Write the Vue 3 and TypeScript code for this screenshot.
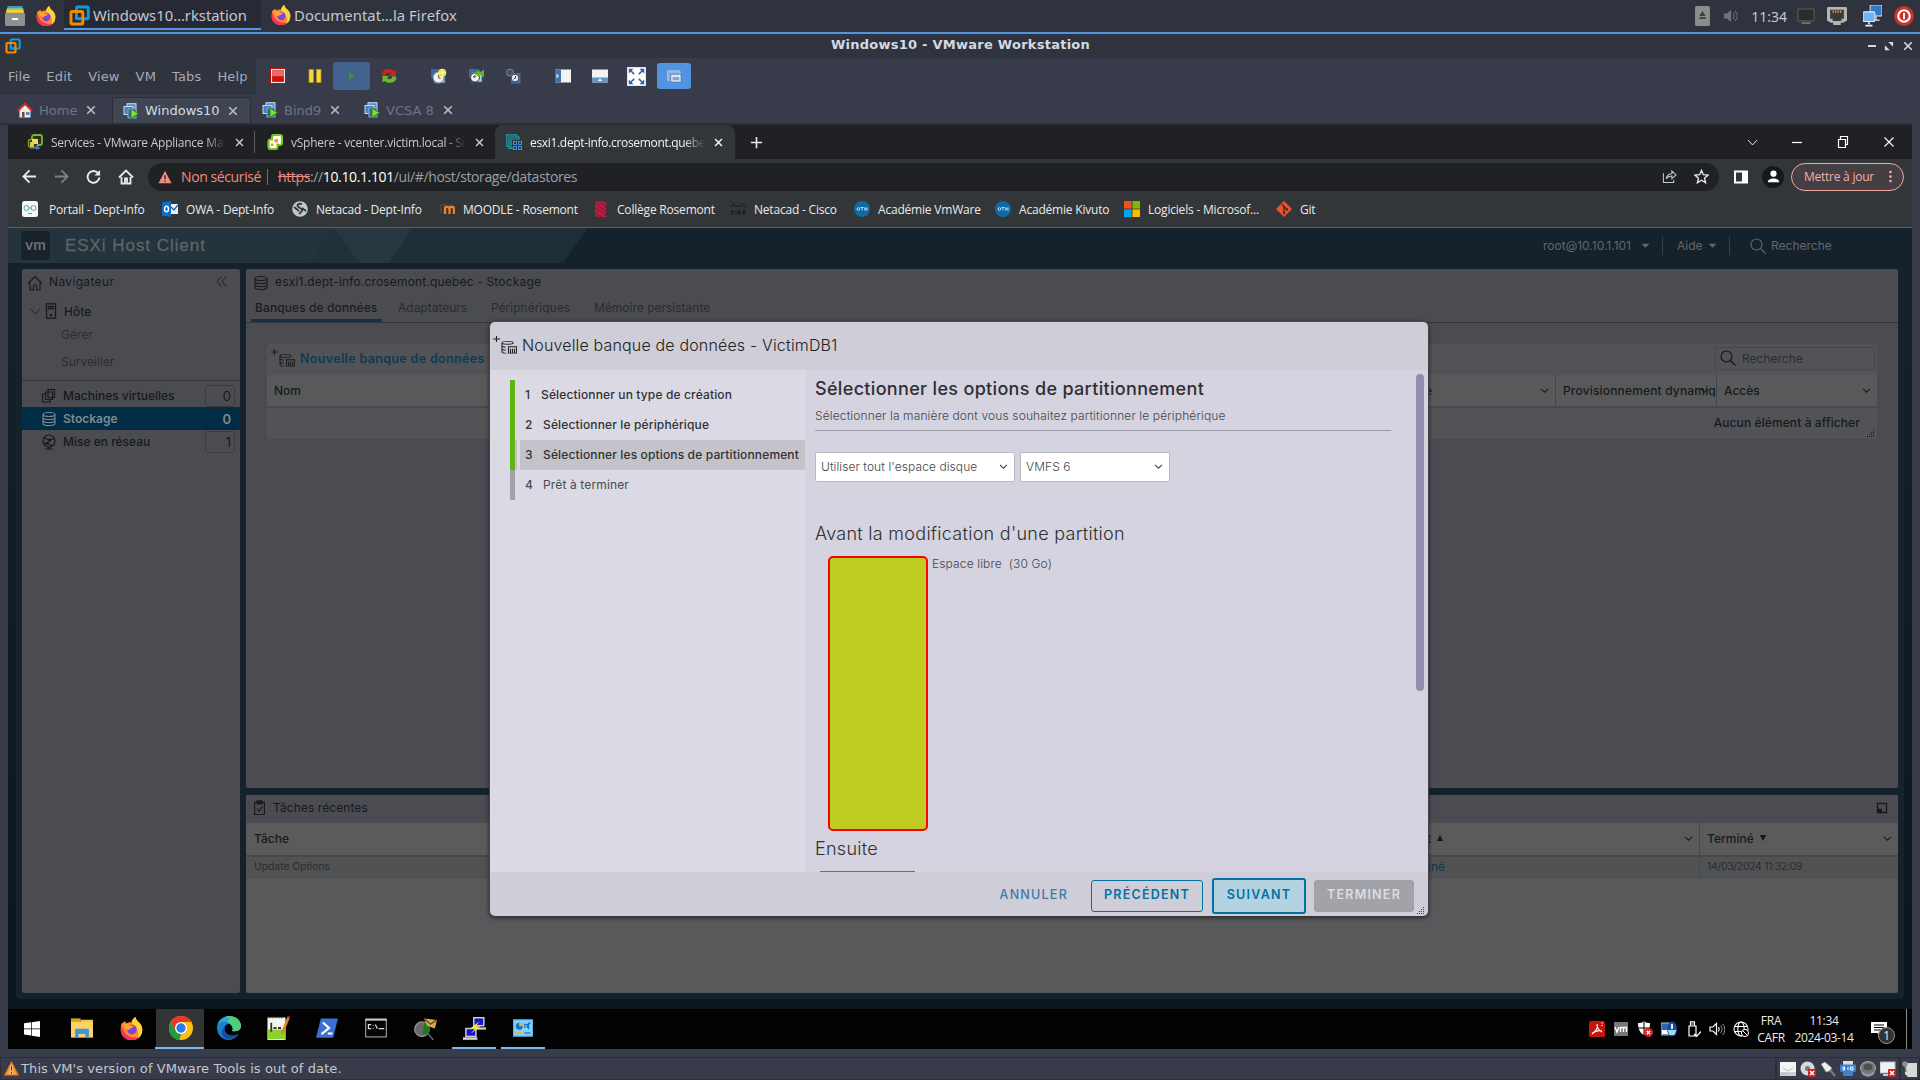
<script setup lang="ts">
import { h } from 'vue'

const gears = '<rect x="1" y="1" width="9" height="9" fill="#3d6a9c"/><rect x="4" y="4" width="10" height="10" fill="#b9d3ea" stroke="#41699b"/>'
const firefox = '<path d="M1 4.500L3.500 3l1 1.500C6 3.500 7 3.500 8 4c.3-2 1.300-3.200 2.800-4 .2 2 1.400 2.800 2.700 4C15 5.500 15.500 7 15.500 9a7.500 7.200 0 01-15 0c0-1.700.2-3.200.5-4.500z" fill="#ff8a26"/><path d="M8 4c.3-2 1.300-3.200 2.800-4 .2 2 1.400 2.800 2.700 4 1.500 1.500 2 3 2 5 0 3-1.500 5-3.500 6.200 1.500-2.500 1.500-7-4-11.200z" fill="#ffd338"/><path d="M.5 9c0 4 3.500 7.200 7.500 7.200 2.500 0 4-.8 5-2C7 15 2 12 1.500 6z" fill="#f8315e"/><circle cx="8.300" cy="8.800" r="3.300" fill="#7a46dd"/><path d="M2.500 5.500C4 4 6 5 7 6c1 0 2 0 2.500.6C8.500 8 7 7.500 6 9 4.500 9 3 7.500 2.500 5.500z" fill="#ffa436"/>'
const vmTab = '<rect x="4" y="0.700" width="9" height="8" fill="#5b8dc4" stroke="#c8dcf2"/><rect x="1" y="3.500" width="9" height="8" fill="#4a7fbd" stroke="#c8dcf2"/><rect x="5" y="6" width="8" height="9" fill="#35659e" stroke="#7fa9d6"/><path d="M8 6l7.500 4.700L8 15.500z" fill="#7fe02c" stroke="#2c7a10" stroke-width=".8"/>'
const vmware = '<rect x="5.700" y="1.500" width="9" height="9" rx="1" fill="none" stroke="#0f9bd8" stroke-width="2.200"/><rect x="1.500" y="5" width="9" height="9.500" rx="1" fill="none" stroke="#f38b00" stroke-width="2.200"/><path d="M5.700 6.500V10.500H9.500" fill="none" stroke="#0f9bd8" stroke-width="2"/>'
const db = '<ellipse cx="8" cy="3.500" rx="6" ry="2"/><path d="M2 3.500v9c0 2.700 12 2.700 12 0v-9M2 6.500c0 2.700 12 2.700 12 0M2 9.500c0 2.700 12 2.700 12 0"/>'
const stroke = (d: string, w = 1, c = 'currentColor') => `<g fill="none" stroke="${c}" stroke-width="${w}">${d}</g>`

const glyphs: Record<string, string> = {
  firefox, vmware, vmTab,
  drawer: '<rect x="2" y="0" width="12" height="4" fill="#4a8ee0"/><rect x="1.500" y="1.500" width="13" height="3" fill="#7fcf4a"/><rect x="1" y="3" width="14" height="3" fill="#f3cf45"/><rect x="0" y="5.300" width="16" height="10.700" rx="1" fill="#8f8f8f"/><rect x="5.500" y="9.500" width="5" height="1.700" rx=".5" fill="#fff"/>',
  eject: '<rect x="1" y="0" width="14" height="16" rx="1.500" fill="#8d8d8d"/><path d="M8 4l3 4H5zM5 9h6v1.300H5z" fill="#3f3f3f"/>',
  sound: '<path d="M1 5.500h3L8 2v12l-4-3.500H1z" fill="#6f737c"/>' + stroke('<path d="M10 5c1.500 2 1.500 4 0 6M12 3c3 3 3 7 0 10"/>', 1.2, '#666a74'),
  monitor: '<rect x="0" y="1" width="16" height="12" rx="1" fill="#4c4c4c"/><rect x="1.500" y="2.500" width="13" height="9" fill="#2c2c2c"/><rect x="4" y="13.500" width="8" height="1.500" fill="#777"/>',
  port: '<path d="M1 0h14a1 1 0 011 1v11l-3 2h-2v2H5v-2H3l-3-2V1a1 1 0 011-1z" fill="#b4b4b4"/><path d="M2.500 2.500h11v8h-2v2h-7v-2h-2z" fill="#3a3a3a"/><path d="M5 3v2M7 3v2M9 3v2M11 3v2" stroke="#d8b23a"/>',
  net: '<rect x="6" y="0" width="10" height="8" rx="1" fill="#3377cc" stroke="#dbe6f3" stroke-width=".8"/><path d="M11 8v3M9 11h5" stroke="#ddd"/><rect x="0" y="5" width="10" height="7" rx="1" fill="#6fb4f2" stroke="#e7eef6" stroke-width=".8"/><path d="M5 12v2M2 15h6" stroke="#eee" stroke-width="1.400"/>',
  power: '<circle cx="8" cy="8" r="8" fill="#c8322b"/><circle cx="8" cy="8" r="4.600" fill="none" stroke="#fff" stroke-width="1.700"/><path d="M8 5.500v5" stroke="#fff" stroke-width="1.500"/>',
  maximize: '<path d="M7 2.500h6.500V9zM2.500 7v6.500H9z" fill="#d3dae3"/>',
  stop: '<rect x="1.500" y="1.500" width="13" height="13" fill="#d30f0f" stroke="#fbe3e3" stroke-width="1.200"/><rect x="2.200" y="2.200" width="11.600" height="6" fill="#e0706d"/><rect x=".5" y=".5" width="15" height="15" fill="none" stroke="#b80b0b" stroke-width="1"/>',
  pause: '<rect x="2" y="1.500" width="4.500" height="13" fill="#f3d93a" stroke="#b98e12" stroke-width=".7"/><rect x="9.500" y="1.500" width="4.500" height="13" fill="#f3d93a" stroke="#b98e12" stroke-width=".7"/>',
  play: '<path d="M4 2l8 6-8 6z" fill="#4a7f68" stroke="#2f6b57"/>',
  cycle: '<path d="M.5 7c0-6 8-7.500 12-4l2-1.500V8H8l2-2C8 4 5 4.500 4.500 8z" fill="#c8261c"/><path d="M15.500 9c0 6-8 7.500-12 4l-2 1.500V8H8l-2 2c2 2 5 1.500 5.500-2z" fill="#6cb82c"/><path d="M14.500 1.500V8H8l2-2c.8-1 .5-1.500 0-2l2.500-1z" fill="#c8261c"/>',
  snap: gears + '<circle cx="8" cy="9" r="5" fill="#f3f3f3" stroke="#999"/><path d="M8 9V6.500M8 9l2 1" stroke="#555"/><circle cx="11.500" cy="4.500" r="3.800" fill="#f6e13a"/><path d="M11.500 1v7M8 4.500h7" stroke="#fff7b0"/>',
  revert: gears + '<circle cx="7" cy="9.500" r="4.500" fill="#f3f3f3" stroke="#333"/><path d="M7 9.500V7M7 9.500l-2-1" stroke="#333"/><path d="M16 1.500v8L11.500 6v3.500L6.500 5.500l5-4V5z" fill="#5cb62c"/>',
  manage: '<circle cx="5" cy="4.500" r="3.500" fill="#444f63" stroke="#7a8aa4"/><rect x="6" y="5" width="9.500" height="10.500" fill="#3f6fa8"/><circle cx="10" cy="10" r="3.800" fill="#e7edf3" stroke="#444"/><path d="M10.500 8v2l-2 1" stroke="#333" fill="none"/>',
  side: '<rect x="0" y="1.500" width="16" height="13" fill="#f2f2f2"/><rect x="0" y="1.500" width="6" height="13" fill="#3c73ad"/><path d="M1.500 5.500v5L4 8z" fill="#dce8f4"/>',
  thumb: '<rect x="0" y="1.500" width="16" height="13" fill="#f2f2f2"/><rect x="0" y="9.500" width="16" height="5" fill="#5e93cc"/><path d="M5.500 13h5L8 10.500z" fill="#e8f0f8"/>',
  full: '<rect width="16" height="16" fill="#fff" stroke="#bbb" stroke-width=".6"/><path d="M1.500 1.500h4l-4 4zM14.500 1.500h-4l4 4zM1.500 14.500h4l-4-4zM14.500 14.500h-4l4-4z" fill="#2b62a5"/><path d="M3 3l3 3M13 3l-3 3M3 13l3-3M13 13l-3-3" stroke="#2b62a5" stroke-width="1.300"/>',
  unity: '<rect x="0" y="2" width="14" height="10" rx="1" fill="#8fb2dc" stroke="#b9cfe9"/><rect x="4" y="5.500" width="11" height="8.500" fill="#dce8f5" stroke="#3f6ea6" stroke-width=".8"/><rect x="6" y="8.500" width="7" height="3.500" fill="#7fa4cf"/>',
  homeRed: '<path d="M2.500 8L8 3l5.500 5v7.500h-11z" fill="#eceae6"/><path d="M.7 9L8 1.700 15.300 9" fill="none" stroke="#d42a2a" stroke-width="1.900"/><path d="M5 10h2.500v5.500H5z" fill="#6b4a3a"/><path d="M9 10h3.500v3H9z" fill="#5a86ba"/>',
  close: stroke('<path d="M3 3l10 10M13 3L3 13"/>', 2.2),
  thinClose: stroke('<path d="M2 2l12 12M14 2L2 14"/>', 1.5),
  services: '<rect x="5" y="1" width="10" height="10" rx="2" fill="#2c2f22" stroke="#7ab62c" stroke-width="1.800"/><rect x="1.500" y="5.500" width="9" height="8" rx="2" fill="#2c2f22" stroke="#8b9a3c" stroke-width="1.300"/><path d="M5 5h6v5H5z" fill="#f0dc5a"/><path d="M3 8h4v5H3z" fill="#e9c63a"/><path d="M3 13.500h6v-2l5 2.500-5 2v-1.500H3z" fill="#3d7cc6"/>',
  vsphere: '<rect x="5" y="1" width="10" height="10" rx="2" fill="#fff" stroke="#7fc21e" stroke-width="2.200"/><rect x="1.500" y="5.500" width="9" height="9.500" rx="2" fill="#fff" stroke="#7fc21e" stroke-width="2.200"/><path d="M6 3.500h7v6H6z" fill="#fff"/><rect x="7.500" y="5" width="3.500" height="3.500" fill="#f39a1a"/><rect x="4" y="9.500" width="2.500" height="2.500" fill="#f39a1a"/>',
  esxi: stroke('<path d="M3 12.500H.8V.8h10V3M5.500 14.500H3V3h10v2.500M7 14.500H5V5h8.500"/>', 1.2, '#1ba0b0') + stroke('<rect x="7.500" y="7.500" width="3" height="3"/><rect x="12.500" y="7.500" width="3" height="3"/><rect x="7.500" y="12.500" width="3" height="3"/><rect x="12.500" y="12.500" width="3" height="3"/>', 1, '#3c8fd0'),
  plus: stroke('<path d="M8 2v12M2 8h12"/>', 1.7),
  chevron: stroke('<path d="M3 5.500l5 5 5-5"/>', 1.5),
  thinChevron: stroke('<path d="M2.500 5l5.500 6 5.500-6"/>', 1.1),
  min: stroke('<path d="M3 8.500h10"/>', 1.2),
  restore: stroke('<path d="M3.500 5.500h7v8h-7zM5.500 5.500v-3h7v8h-2"/>', 1.2),
  back: stroke('<path d="M15 8H2M8 1.500L1.500 8 8 14.500"/>', 1.9),
  fwd: stroke('<path d="M1 8h13M8 1.500L14.500 8 8 14.500"/>', 1.9),
  reload: stroke('<path d="M13 4.500A6.300 6.300 0 1014.300 9"/>', 2) + '<path d="M15 1v6H9z" fill="currentColor"/>',
  home: stroke('<path d="M3.500 8v6.500h3.500v-5h2v5h3.500V8M1 8.500L8 1.500l7 7"/>', 1.8),
  warn: '<path d="M8 1l7.500 14H.5z" fill="#f28b82"/><path d="M8 6v4.500M8 12v1.500" stroke="#202124" stroke-width="1.500"/>',
  share: stroke('<path d="M1.500 4.500V14.500h11V11.500M4.500 10.500c.5-4 3-5.500 6-5.500V2l4.500 4.300-4.500 4V7.500c-2.500 0-4.500.6-6 3z"/>', 1.1),
  star: stroke('<path d="M8 1.500l2 4.600 5 .4-3.800 3.300 1.200 4.900L8 12l-4.400 2.700 1.200-4.900L1 6.500l5-.4z"/>', 1.4),
  sidebar: '<path d="M1 1.500h14v13H1zM3 3.500v9h6v-9z" fill="#fff" fill-rule="evenodd"/>',
  user: '<circle cx="8" cy="5" r="3.300" fill="#fff"/><path d="M2 14c0-5 12-5 12 0z" fill="#fff"/>',
  dots: '<circle cx="8" cy="2.500" r="1.600" fill="currentColor"/><circle cx="8" cy="8" r="1.600" fill="currentColor"/><circle cx="8" cy="13.500" r="1.600" fill="currentColor"/>',
  portail: '<rect width="16" height="16" rx="2.500" fill="#f4f7f8"/>' + stroke('<circle cx="4.500" cy="7" r="2.500"/><circle cx="11.500" cy="7" r="2.500"/><path d="M7 7h2M6 12.500h4"/>', 1, '#5ba0b5'),
  owa: '<rect x="5" y="3" width="11" height="10" fill="#e8f2fb"/><path d="M9 6l3 3 4-5" stroke="#0a62b5" fill="none" stroke-width="1.300"/><path d="M0 1.500L9 0v16l-9-1.500z" fill="#0a6fcb"/><ellipse cx="4.500" cy="8" rx="2" ry="2.700" fill="none" stroke="#fff" stroke-width="1.500"/>',
  globe: '<circle cx="8" cy="8" r="7.800" fill="#c3c6c8"/><path d="M10 3c-5-1-6 2-2 4s2 3-1 6M2 6l5 4M10 7l4 3" stroke="#34383a" stroke-width="1.900" fill="none"/>',
  moodle: stroke('<path d="M6 13V8c0-3 4.500-3 4.500 0v5M10.500 8c0-3 4.500-3 4.500 0v5"/>', 2.3, '#e9822b') + stroke('<path d="M0 5l5-1.500 5 1.500M2 6v6"/>', 1.2, '#5d4c3f'),
  rosemont: '<path d="M2 0h10l2 3-2 3 2 4-2 3 2 3H2z" fill="#a5173b"/>' + stroke('<path d="M2 4l11 9M2 9l10 7M4 1l9 7"/>', .6, '#d23a58'),
  cisco: stroke('<path d="M1 4v2M3.500 2v4M6 4v2M8 4v2M10 4v2M12.500 2v4M15 4v2"/>', 1, '#17191b') + stroke('<path d="M4 10H1.500v3H4M6 9.500V14M10 10H8v1.500h2V13H8M15 10h-2v3h2z"/>', 1, '#17191b'),
  oth: '<circle cx="8" cy="8" r="8" fill="#0f6aa8"/>' + stroke('<circle cx="4.400" cy="8" r="1.300"/><path d="M6.500 6.500h3M8 6.500v3M10.800 6.300v3.400M13 6.300v3.400M10.800 8H13"/>', .9, '#d7e7f2'),
  ms: '<path fill="#f25022" d="M0 0h7.600v7.600H0z"/><path fill="#7fba00" d="M8.400 0H16v7.600H8.400z"/><path fill="#00a4ef" d="M0 8.400h7.600V16H0z"/><path fill="#ffb900" d="M8.400 8.400H16V16H8.400z"/>',
  git: '<path d="M8 0l8 8-8 8-8-8z" fill="#f0502f"/><path d="M6 3.500l2 2V12M8 5.500l3 3" stroke="#3a2620" stroke-width="1.200" fill="none"/><circle cx="8" cy="12" r="1.200" fill="#3a2620"/><circle cx="11" cy="8.500" r="1.200" fill="#3a2620"/>',
  house: stroke('<path d="M3 7.500V15h3.500v-5h3v5H13V7.500M1 8.500l7-7 7 7"/>', 1.1),
  collapse: stroke('<path d="M8 2L2.500 8 8 14M14 2L8.500 8l5.500 6"/>', 1.1),
  host: stroke('<rect x="3.500" y=".8" width="9" height="14.400"/><path d="M5 3.500h6M5 5.500h6"/>', 1.3) + '<circle cx="8" cy="12" r="1.300" fill="currentColor"/>',
  vms: stroke('<rect x="7" y="1.500" width="6.500" height="8"/><path d="M5.500 6H1.500v8h7.500v-3M4.500 4h7v7.500h-7z"/>', 1.2),
  db: stroke(db, 1.1),
  network: stroke('<circle cx="8" cy="7" r="6"/><path d="M4 15h8M8 13v2M3.500 4l5.500 2 4-1.500M9 6l-3 3.500-3.500-1M6 9.500l5 2"/>', 1.2) + '<circle cx="9" cy="6" r="1.400" fill="currentColor"/><circle cx="6" cy="9.500" r="1.400" fill="currentColor"/>',
  newDb: stroke('<path d="M0 3.500h7M3.500 0v7"/><path d="M20 9V8c0-2.300-11-2.300-11 0v10c0 1.500 3 2 4.500 2M9 8c0 2.300 11 2.300 11 0M9 11.500c0 1 2 1.500 4 1.500M9 15c0 1 2 1.500 4 1.500M15.500 12.500h8v7.500h-8zM17.500 15v5M19.500 15v5M21.500 15v5"/>', 1.1),
  search: stroke('<circle cx="6.500" cy="6.500" r="5.500"/><path d="M10.500 10.500L15.500 15.500"/>', 1.1),
  caret: '<path d="M1 5h14L8 12z" fill="currentColor"/>',
  up: '<path d="M8 2l6.500 12h-13z" fill="currentColor"/>',
  down: '<path d="M8 14L1.500 2h13z" fill="currentColor"/>',
  tasks: stroke('<path d="M2 2.500h12v13H2zM5 1h6v3H5zM5 9l2.500 3L11.500 7"/>', 1.4),
  pop: stroke('<rect x="2" y="2" width="12" height="12"/>', 1.8) + '<path d="M2 9h6v6H2z" fill="currentColor"/>',
  grip: '<path d="M12 2h2v2h-2zM8 6h2v2H8zM12 6h2v2h-2zM4 10h2v2H4zM8 10h2v2H8zM12 10h2v2h-2zM0 14h2v2H0zM4 14h2v2H4zM8 14h2v2H8zM12 14h2v2h-2z" fill="currentColor"/>',
  start: '<path d="M0 2.300L7 1.300v6.300H0zM7.700 1.200L16 0v7.600H7.700zM0 8.300h7v6.300l-7-1zM7.700 8.300H16V16l-8.300-1.200z" fill="#fff"/>',
  explorer: '<path d="M0 1h7v3H0z" fill="#e0a010"/><path d="M7 2h9v2H7z" fill="#f6c648"/><path d="M0 3.500h16V15H0z" fill="#fdd461"/><path d="M3 15.300V8.500h10v6.800h-2.500v-3h-5v3z" fill="#3c96dc"/>',
  chrome: '<circle cx="8" cy="8" r="8" fill="#fbc116"/><path d="M1 4a8 8 0 0114 0H8L4.500 10z" fill="#e33b2e"/><path d="M1 4l3.600 6L8 12l-1 4A8 8 0 011 4z" fill="#249a41"/><circle cx="8" cy="8" r="4" fill="#fff"/><circle cx="8" cy="8" r="3.100" fill="#2f79e8"/>',
  edge: '<path d="M0 8A8 8 0 018 0c5 0 8 3.300 8 6.500S13.500 10.500 10 10c1-1 .5-3-1-4.500C6 3 1 4 0 8z" fill="#2fa8dd"/><path d="M6 .2C11-1 16 2.500 16 6.500c0 3-2.500 4-6 3.500 1.500-2-.5-5-4-6C9 3 8 1 6 .2z" fill="#4fcf7a"/><path d="M0 8c.5-4 6-5.500 9-2.500-3-1-5 2-3.500 5 1.500 3 5 4 9 1.500C12 15.500 9 16 8 16a8 8 0 01-8-8z" fill="#1b7fd4"/><path d="M5.300 7.500C4 11 8 14.500 14.500 12 12 16 7.500 16.500 5 14.500 2 12 3 8.500 5.300 7.500z" fill="#124f9c"/>',
  notepad: '<path d="M1 1h12v15H1z" fill="#f3f6ee"/><path d="M1 9h12v6.500H1z" fill="#8ed12f"/><path d="M3.500 4.500v6M5 8h2M8 8h2" stroke="#333" stroke-width="1.200"/><path d="M2 1h10" stroke="#555" stroke-dasharray="1 1"/><path d="M15 1l-4.500 11" stroke="#d98b26" stroke-width="1.800"/><path d="M15.300.2l-.5 1.500" stroke="#c23a2a" stroke-width="1.800"/>',
  powershell: '<path d="M3.500 1H16l-3.500 14H0z" fill="#3b6fd0"/><path d="M5 4l4.500 4L4 12.500M8.500 12H12" stroke="#fff" stroke-width="1.600" fill="none"/>',
  cmd: '<rect x=".5" y="1.500" width="15" height="13" fill="#050505" stroke="#a5a5a5" stroke-width=".8"/><path d="M.5 2h15" stroke="#ccc" stroke-width="1.300"/><path d="M4.500 5.500h-2v3h2M6 6v.5M6 8v.5M7.500 5.500l1.500 3M10 8.500h4" stroke="#ddd" fill="none" stroke-width=".9"/>',
  mailscan: '<circle cx="5.500" cy="8.500" r="5" fill="#686868" stroke="#8d8d8d"/><path d="M7 4h4l-1 8H6z" fill="#157c1c"/><path d="M9.500 11.500l4 4.500" stroke="#666" stroke-width="1"/><path d="M7 1l9 1-1.500 6L9 6z" fill="#d9a94f"/><path d="M7 1l4.500 4L16 2" stroke="#6b4a12" fill="none"/>',
  putty: '<rect x="7.500" y="0.500" width="7" height="5.500" fill="#1414d8" stroke="#cfcfcf"/><path d="M7 8h9" stroke="#cfcfcf" stroke-width="1.600"/><rect x="2" y="8" width="7" height="5.500" fill="#1414d8" stroke="#cfcfcf"/><path d="M0 15h10" stroke="#cfcfcf" stroke-width="1.800"/><path d="M11.500 3L5 8h3.500l-3 3.500 7-5H9z" fill="#f5ec2a"/>',
  panel: '<rect x="0" y="1" width="16" height="14" fill="#58b9f0"/><rect x="1" y="2" width="14" height="12" fill="#86d3fa"/><circle cx="5" cy="6.500" r="2.800" fill="#1473c4"/><path d="M5 6.500V3.700a2.800 2.800 0 012.800 2.800z" fill="#f7b233"/><path d="M9.500 8V5h2v3M12.500 9V4h1.500" stroke="#1473c4" fill="none"/><path d="M2 12h6" stroke="#f7b233" stroke-width="1.300"/><path d="M9 12h5" stroke="#1473c4"/>',
  adobe: '<rect width="16" height="16" rx="1.500" fill="#c5160c"/><path d="M3 13c4-3 6-7 5-10M3 12.500c3-2.500 7-3.500 10-2.500M8 6c1 2 3 4 5 5" stroke="#fff" fill="none" stroke-width="1.200"/><path d="M12 2h2M12 4.500h2" stroke="#f2b8b4"/>',
  vm: '<rect x="1" y="1" width="14" height="14" fill="#777"/><path d="M2 6l2 5 2-5M7.500 11V6.500h3V11M10.500 6.500h3V11" stroke="#fff" stroke-width="1.400" fill="none"/>',
  shield: '<path d="M7 0c2 2 4 2 6 2 0 6-2 10-6 12C3 12 1 8 1 2c2 0 4 0 6-2z" fill="#fff"/><path d="M7 0v14M1 7h12" stroke="#000"/><circle cx="11.500" cy="11.500" r="4.500" fill="#d8231b"/><path d="M9.800 9.800l3.400 3.400M13.200 9.800l-3.400 3.400" stroke="#fff" stroke-width="1.400"/>',
  display: '<rect x="0" y="2" width="8" height="12" fill="#2c66b4" stroke="#9cc4ee"/><path d="M1 9h6v4H1z" fill="#fff"/><ellipse cx="11" cy="8" rx="5" ry="7.500" fill="#1c4d9c"/><path d="M6.500 9h9l-2 5h-5z" fill="#9ed9f2"/><path d="M11 3v5" stroke="#fff" stroke-width="1.800"/>',
  usb: stroke('<path d="M4 5h7v10H4zM5.500 5V.8h4V5M6.500 3h2M9 13l2.500 2.500L16 10.500"/>', 1.2, '#fff'),
  volume: stroke('<path d="M1 6h3l3.500-3.500v11L4 10H1zM9.500 6c1 1.500 1 3 0 4.500"/>', 1.2, '#fff') + stroke('<path d="M11.500 4.500c2 2.500 2 5 0 7.500M13.500 3c3 3 3 8 0 11"/>', 1, '#999'),
  web: stroke('<circle cx="8" cy="8" r="7"/><ellipse cx="8" cy="8" rx="3.200" ry="7"/><path d="M1.500 5.500h13M1.500 10.500h13"/>', 1.1, '#fff') + '<circle cx="12" cy="12" r="3.600" fill="#000" stroke="#fff"/><path d="M9.500 9.500l5 5" stroke="#fff"/>',
  note: '<path d="M0 1h16v11H9.500L12 15.500 6 12H0z" fill="#fff"/><path d="M3 4h10M3 6.500h10M3 9h10" stroke="#000"/>',
  alert: '<path d="M8 0l8 15.500H0z" fill="#f08018" stroke="#b65405" stroke-width=".6"/><path d="M8 3l5.500 11h-11z" fill="#f9a24a"/><path d="M8 5v5M8 11.500v2" stroke="#fff" stroke-width="2"/><path d="M8 5.500v4.500M8 11.800v1.400" stroke="#3a2a10" stroke-width="1.200"/>',
  hdd: '<rect x="0" y="1" width="16" height="14" fill="#f3f3f3"/><path d="M0 11h16v4H0z" fill="#cfcfcf"/><path d="M3 7l5 3 5-3M2 13h7" stroke="#bbb" fill="none"/>',
  cd: '<circle cx="7.500" cy="7.500" r="7" fill="#d9d9d9"/><circle cx="7.500" cy="7.500" r="2.500" fill="#777"/><rect x="8" y="8" width="8" height="8" rx="1" fill="#d1201c"/><path d="M10 10l4 4M14 10l-4 4" stroke="#fff" stroke-width="1.600"/>',
  plug: '<path d="M1 3l4-2 7 6-2 3-4 1z" fill="#eee" stroke="#888" stroke-width=".6"/><path d="M10 9l5 6" stroke="#777" stroke-width="2.500"/>',
  serial: '<path d="M3 0h10v4H3z" fill="#ddd"/><path d="M0 3.500h16v7l-3 1v3.500H3V11.500l-3-1z" fill="#3f7fce"/><path d="M3 6v3h1.500V6zM8 6v3M10.500 6v3H13V6z" stroke="#fff" fill="none"/>',
  speaker: '<ellipse cx="8" cy="7" rx="7.500" ry="6.500" fill="#777" stroke="#aaa"/><ellipse cx="8" cy="6" rx="4.500" ry="3.200" fill="#4f4f4f"/><path d="M2 11c2 5 10 5 12 0" stroke="#999" stroke-width="2" fill="none"/>',
  screenOff: '<rect x="0" y="1" width="15" height="11" fill="#f1f1f1" stroke="#bbb"/><path d="M3 14h8" stroke="#ccc" stroke-width="2"/><rect x="8" y="8" width="8" height="8" rx="1" fill="#d1201c"/><path d="M10 10l4 4M14 10l-4 4" stroke="#fff" stroke-width="1.600"/>',
  message: '<path d="M3 2h12v14H6l-3-3z" fill="#d6dcd4"/><circle cx="3" cy="3" r="2.700" fill="#8e8e8e"/><path d="M3 5l1 6" stroke="#777" stroke-width="1.500"/>',
}

const Icon = (p: { n: string; s?: number; w?: number }) =>
  h('svg', { width: p.w ?? p.s ?? 16, height: p.s ?? 16, viewBox: p.n === 'newDb' ? '0 0 24 21' : '0 0 16 16', preserveAspectRatio: 'none', innerHTML: glyphs[p.n], class: 'ic' })
Icon.props = ['n', 's', 'w']

const menus = ['File', 'Edit', 'View', 'VM', 'Tabs', 'Help']
const vmTabs = [
  { t: 'Home', i: 'homeRed', w: 112, p: 17 },
  { t: 'Windows10', i: 'vmTab', w: 139, p: 10, on: true },
  { t: 'Bind9', i: 'vmTab', w: 103, p: 11 },
  { t: 'VCSA 8', i: 'vmTab', w: 113, p: 10 },
]
const tabs = [
  { t: 'Services - VMware Appliance Ma', i: 'services' },
  { t: 'vSphere - vcenter.victim.local - Su', i: 'vsphere' },
  { t: 'esxi1.dept-info.crosemont.quebec', i: 'esxi', on: true },
]
const bookmarks = [
  { i: 'portail', t: 'Portail - Dept-Info', w: 97 },
  { i: 'owa', t: 'OWA - Dept-Info', w: 90 },
  { i: 'globe', t: 'Netacad - Dept-Info', w: 107 },
  { i: 'moodle', t: 'MOODLE - Rosemont', w: 114 },
  { i: 'rosemont', t: 'Collège Rosemont', w: 97 },
  { i: 'cisco', t: 'Netacad - Cisco', w: 84 },
  { i: 'oth', t: 'Académie VmWare', w: 101 },
  { i: 'oth', t: 'Académie Kivuto', w: 89 },
  { i: 'ms', t: 'Logiciels - Microsof...', w: 112 },
  { i: 'git', t: 'Git', w: 20 },
]
const nav = [
  { i: 'vms', t: 'Machines virtuelles', n: 0 },
  { i: 'db', t: 'Stockage', n: 0, on: true },
  { i: 'network', t: 'Mise en réseau', n: 1 },
]
const steps = ['Sélectionner un type de création', 'Sélectionner le périphérique', 'Sélectionner les options de partitionnement', 'Prêt à terminer']
const apps = [
  { i: 'explorer', s: 22 }, { i: 'firefox', s: 23 }, { i: 'chrome', s: 24, on: true }, { i: 'edge', s: 24 }, { i: 'notepad', s: 24 },
  { i: 'powershell', s: 22 }, { i: 'cmd', s: 22 }, { i: 'mailscan', s: 23 }, { i: 'putty', s: 23, run: true }, { i: 'panel', s: 20, run: true },
]
const tray = ['adobe', 'vm', 'shield', 'display', 'usb', 'volume', 'web']
const devices = ['hdd', 'cd', 'plug', 'serial', 'speaker', 'screenOff']
</script>

<template>
  <div class="desktop">
    <div class="panel">
      <Icon n="drawer" :s="20" />
      <Icon n="firefox" :s="20" />
      <div class="task on"><Icon n="vmware" :s="21" /><span>Windows10…rkstation</span></div>
      <div class="task second"><Icon n="firefox" :s="20" /><span>Documentat…la Firefox</span></div>
      <div class="systray">
        <Icon n="eject" :s="20" :w="17" /><Icon n="sound" /><span class="clock">11:34</span>
        <Icon n="monitor" :s="18" /><Icon n="port" :s="18" :w="20" /><Icon n="net" :s="22" :w="19" class="netw" /><Icon n="power" :s="20" />
      </div>
    </div>
    <div class="titlebar">
      <Icon n="vmware" />
      <b>Windows10 - VMware Workstation</b>
      <div class="wm"><i class="dash"></i><Icon n="maximize" :s="12" /><Icon n="close" :s="12" /></div>
    </div>
    <div class="menubar">
      <div class="menus"><span v-for="m in menus" :key="m">{{ m }}</span></div>
      <div class="tools">
        <i><Icon n="stop" /></i><i><Icon n="pause" /></i><i class="dim"><Icon n="play" /></i><i><Icon n="cycle" /></i>
        <i class="gap"><Icon n="snap" :s="17" /></i><i><Icon n="revert" /></i><i><Icon n="manage" /></i>
        <i class="gap"><Icon n="side" /></i><i><Icon n="thumb" /></i><i><Icon n="full" :s="19" /></i><i class="blue"><Icon n="unity" :s="15" /></i>
      </div>
    </div>
    <div class="vmtabs">
      <div v-for="t in vmTabs" :key="t.t" class="vmtab" :class="{ on: t.on }" :style="{ width: t.w + 'px', paddingLeft: t.p + 'px' }">
        <Icon :n="t.i" :s="16" /><span>{{ t.t }}</span><Icon n="close" :s="12" />
      </div>
    </div>

    <div class="guest">
      <div class="ctabs">
        <div v-for="t in tabs" :key="t.t" class="ctab" :class="{ on: t.on }">
          <Icon :n="t.i" /><span>{{ t.t }}</span><Icon n="close" :s="11" />
        </div>
        <Icon n="plus" :s="15" />
        <div class="winbtns"><Icon n="thinChevron" :s="13" /><Icon n="min" /><Icon n="restore" /><Icon n="thinClose" :s="12" /></div>
      </div>
      <div class="ctool">
        <Icon n="back" :s="15" /><Icon n="fwd" :s="15" class="off" /><Icon n="reload" :s="15" /><Icon n="home" :s="16" />
        <div class="url">
          <Icon n="warn" :s="14" /><span class="insec">Non sécurisé</span><i class="bar"></i>
          <span class="addr"><s>https</s>://<b>10.10.1.101</b>/ui/#/host/storage/datastores</span>
          <Icon n="share" :s="15" /><Icon n="star" :s="15" />
        </div>
        <Icon n="sidebar" class="side" /><span class="avatar"><Icon n="user" :s="15" /></span>
        <div class="update"><span>Mettre à jour</span><Icon n="dots" :s="13" /></div>
      </div>
      <div class="marks">
        <div v-for="b in bookmarks" :key="b.t" class="mark"><Icon :n="b.i" /><span :style="{ width: b.w + 'px' }">{{ b.t }}</span></div>
      </div>

      <div class="page">
        <svg class="facets" width="1904" height="35"><path d="M0 0H325L352 35H0z" fill="#25333d" /><path d="M325 0L352 35H300z" fill="#22303a" /><path d="M325 0H405L382 35H352z" fill="#28363f" /><path d="M405 0H580L555 35H382z" fill="#1f2d37" /></svg>
        <header class="esx">
          <span class="badge">vm</span><span class="brand">ESXi Host Client</span>
          <div class="acct"><span class="user">root@10.10.1.101</span><Icon n="caret" :s="9" /><i></i><span class="help">Aide</span><Icon n="caret" :s="9" /><i></i><Icon n="search" class="mag" /><span>Recherche</span></div>
        </header>
        <div class="frame">
          <aside class="nav">
            <div class="navhead"><Icon n="house" /><span>Navigateur</span><Icon n="collapse" :s="13" /></div>
            <div class="host"><Icon n="thinChevron" :s="13" /><Icon n="host" /><span>Hôte</span></div>
            <div class="sub">Gérer</div>
            <div class="sub two">Surveiller</div>
            <div class="navlist">
              <div v-for="n in nav" :key="n.t" class="navrow" :class="{ on: n.on }"><Icon :n="n.i" /><span>{{ n.t }}</span><em>{{ n.n }}</em></div>
            </div>
          </aside>
          <div class="col">
            <section class="store">
              <div class="crumb"><Icon n="db" /><span>esxi1.dept-info.crosemont.quebec - Stockage</span></div>
              <div class="subtabs"><span class="on t1">Banques de données</span><span class="t2">Adaptateurs</span><span class="t3">Périphériques</span><span>Mémoire persistante</span></div>
              <div class="grid">
                <div class="gtool"><Icon n="newDb" :w="24" :s="18" /><b>Nouvelle banque de données</b><div class="find"><Icon n="search" /><span>Recherche</span></div></div>
                <div class="ghead">
                  <span class="first">Nom</span>
                  <div class="c1"><span>e</span><Icon n="chevron" :s="11" /></div>
                  <div class="c2"><span>Provisionnement dynamiq</span><Icon n="chevron" :s="11" /></div>
                  <div class="c3"><span>Accès</span><Icon n="chevron" :s="11" /></div>
                </div>
                <div class="grow"><span>Aucun élément à afficher</span><Icon n="grip" :s="8" /></div>
              </div>
            </section>
            <section class="recent">
              <div class="rhead"><Icon n="tasks" :s="15" :w="13" /><span>Tâches récentes</span><Icon n="pop" :s="12" /></div>
              <div class="rcols"><span class="first">Tâche</span><div class="r1"><span>t</span><Icon n="up" :s="8" /><Icon n="chevron" :s="11" class="end" /></div><div class="r2"><span>Terminé</span><Icon n="down" :s="8" /><Icon n="chevron" :s="11" class="end" /></div></div>
              <div class="rrow"><span class="first">Update Options</span><div class="r1"><span class="link">iné</span></div><div class="r2 stamp">14/03/2024 11:32:09</div></div>
            </section>
          </div>
        </div>

        <div class="modal">
          <div class="mhead"><Icon n="newDb" :w="24" :s="18" /><span>Nouvelle banque de données - VictimDB1</span></div>
          <div class="mbody">
            <ol class="steps">
              <li v-for="(s, i) in steps" :key="s" :class="{ cur: i === 2, todo: i === 3 }"><b>{{ i + 1 }}</b><span>{{ s }}</span></li>
            </ol>
            <div class="mcontent">
              <h2>Sélectionner les options de partitionnement</h2>
              <p>Sélectionner la manière dont vous souhaitez partitionner le périphérique</p>
              <div class="selects">
                <div class="select wide"><span>Utiliser tout l'espace disque</span><Icon n="chevron" :s="11" /></div>
                <div class="select"><span>VMFS 6</span><Icon n="chevron" :s="11" /></div>
              </div>
              <h3>Avant la modification d'une partition</h3>
              <div class="part"><div class="disk"></div><span>Espace libre&nbsp; (30 Go)</span></div>
              <h3 class="after">Ensuite</h3>
              <div class="next"></div>
            </div>
            <div class="scroll"></div>
          </div>
          <div class="mfoot"><span class="cancel">ANNULER</span><span class="btn prev">PRÉCÉDENT</span><span class="btn go">SUIVANT</span><span class="btn done">TERMINER</span><Icon n="grip" :s="8" /></div>
        </div>
      </div>

      <div class="taskbar">
        <div class="startbtn"><Icon n="start" /></div>
        <div v-for="a in apps" :key="a.i" class="app" :class="{ on: a.on, run: a.run }"><Icon :n="a.i" :s="a.s" /></div>
        <div class="tray">
          <Icon v-for="t in tray" :key="t" :n="t" />
          <div class="lang"><span>FRA</span><span>CAFR</span></div>
          <div class="date"><span>11:34</span><span>2024-03-14</span></div>
          <div class="notes"><Icon n="note" /><b>1</b></div>
        </div>
      </div>
    </div>

    <div class="status">
      <Icon n="alert" :s="15" /><span>This VM's version of VMware Tools is out of date.</span>
      <div class="devices"><Icon v-for="d in devices" :key="d" :n="d" /></div>
      <div class="msg"><Icon n="message" /></div>
    </div>
  </div>
</template>

<style>
body { background: #383c4a; overflow: hidden; }
.ic { display: block; flex: none; }
</style>

<style scoped>
* { box-sizing: border-box; }
.desktop { width: 1920px; height: 1080px; display: flex; flex-direction: column; background: #383c4a; color: #c3c7d0; font: 13px "DejaVu Sans", sans-serif; white-space: nowrap; overflow: hidden; }
i { font-style: normal; }

.panel { height: 34px; flex: none; display: flex; align-items: flex-start; background: #2f333e; border-bottom: 2px solid #5294e2; padding: 6px 6px 0 5px; gap: 11px; font: 14.800px "Noto Sans", sans-serif; }
.task { display: flex; align-items: center; gap: 3px; height: 30px; margin-top: -6px; margin-left: -3px; padding-left: 5px; width: 197px; }
.task.on { background: #272a34; border-bottom: 2px solid #5294e2; padding-top: 2px; }
.task.second { width: 200px; margin-left: -6px; gap: 3px; letter-spacing: .08px; }
.systray { margin-left: auto; display: flex; align-items: center; height: 20px; gap: 12px; }
.systray .netw { margin-left: 4px; }
.clock { margin: 0 -2px 0 0; font-size: 14px; }
.titlebar { height: 24px; flex: none; display: flex; align-items: center; background: #2f343f; padding: 0 6px 0 5px; justify-content: space-between; color: #d3dae3; }
.titlebar b { font-size: 13px; margin: -3px 0 0 32px; letter-spacing: .25px; }
.wm { display: flex; align-items: center; gap: 7px; }
.dash { width: 8px; height: 2px; background: #d3dae3; }
.menubar { height: 37px; flex: none; display: flex; }
.menus { width: 256px; background: #2f343f; display: flex; align-items: center; gap: 16px; padding-left: 8px; color: #a4aab7; letter-spacing: .15px; }
.tools { display: flex; align-items: center; padding-left: 3px; padding-bottom: 1px; }
.tools i { width: 37px; height: 28px; display: flex; align-items: center; justify-content: center; }
.tools .gap { margin-left: 13px; }
.tools .dim { background: #43628f; border-radius: 3px; }
.tools .blue { width: 34px; height: 26px; background: #5294e2; border-radius: 3px; margin-left: 2px; }
.vmtabs { height: 30px; flex: none; display: flex; padding-top: 2px; border-bottom: 2px solid #2b2e39; margin: 0 8px 0 0; }
.vmtab { display: flex; align-items: center; gap: 6px; color: #6f7482; }
.vmtab .ic:last-child { color: #b8bcc0; margin-left: 2px; }
.vmtab.on { background: #404552; border: 1px solid #2b2e39; border-bottom: 0; color: #d3dae3; }
.vmtab.on .ic:last-child { margin-left: 1px; }

.guest { margin-left: 8px; width: 1904px; height: 924px; flex: none; display: flex; flex-direction: column; font: 12px "Open Sans", sans-serif; letter-spacing: -.25px; color: #e8eaed; }
.ctabs { height: 34px; flex: none; display: flex; align-items: center; background: #202124; padding-left: 7px; }
.ctab { width: 240px; height: 34px; display: flex; align-items: center; gap: 8px; padding-left: 12px; color: #c6c9cc; border-right: 1px solid #4b4d50; border-image: linear-gradient(transparent 20%, #5a5c5f 20% 80%, transparent 80%) 1; }
.ctab:nth-child(2) { border-color: transparent; border-image: none; padding-left: 12px; }
.ctab.on { background: #323639; border: 0; border-radius: 8px 8px 0 0; color: #f1f3f4; padding-left: 11px; }
.ctab.on span { letter-spacing: -.32px; }
.ctab span { width: 175px; -webkit-mask-image: linear-gradient(90deg, #000 88%, transparent); mask-image: linear-gradient(90deg, #000 88%, transparent); }
.ctabs > .ic { margin-left: 14px; }
.winbtns { margin-left: auto; display: flex; align-items: center; gap: 30px; padding-right: 17px; color: #fff; }
.winbtns .ic:last-child { margin-left: 2px; }
.ctool { height: 36px; flex: none; background: #323639; display: flex; align-items: center; padding-left: 14px; gap: 17px; padding-bottom: 1px; }
.off { color: #7d8083; }
.url { width: 1571px; height: 28px; border-radius: 14px; background: #202124; display: flex; align-items: center; padding: 0 10px; margin-left: -3px; font-size: 14px; }
.insec { color: #f28b82; margin-left: 9px; width: 80px; letter-spacing: -.4px; }
.bar { width: 1px; height: 16px; background: #6b6d70; margin: 0 10px 0 6px; }
.addr { color: #9aa0a6; letter-spacing: -.37px; }
.addr s { color: #f28b82; }
.addr b { color: #fff; font-weight: 400; }
.url .ic:nth-last-child(2) { margin-left: auto; margin-right: 17px; color: #c6c9cc; }
.side { margin-left: -3px; }
.avatar { width: 22px; height: 22px; border-radius: 50%; background: #17181a; display: flex; align-items: center; justify-content: center; margin: 0 0 0 -4px; }
.update { width: 113px; height: 28px; border: 1px solid #f5a7a0; border-radius: 14px; color: #f6aea9; background: #433f43; display: flex; align-items: center; justify-content: space-between; padding: 0 6px 0 12px; margin-left: -10px; }
.marks { height: 33px; flex: none; background: #323639; border-bottom: 1px solid #5c5f61; display: flex; align-items: center; gap: 16px; padding: 0 0 4px 14px; letter-spacing: -.2px; }
.mark { display: flex; align-items: center; gap: 8px; }
.mark:first-child { gap: 11px; }

.page { height: 781px; flex: none; position: relative; background: linear-gradient(#15222c, #0b151d); font-family: Inter, sans-serif; letter-spacing: 0; color: #18191b; font-size: 12px; }
.facets { position: absolute; left: 0; top: 0; }
.esx { position: relative; height: 35px; display: flex; align-items: center; padding-left: 13px; color: #646668; }
.badge { width: 29px; height: 29px; border-radius: 3px; background: #17222a; display: flex; align-items: center; justify-content: center; font-size: 14px; font-weight: 600; padding-bottom: 3px; color: #6f7173; }
.brand { font: 17px "Liberation Sans", sans-serif; letter-spacing: .95px; margin-left: 15px; color: #5f6366; -webkit-text-stroke: .3px #5f6366; }
.acct { margin-left: auto; display: flex; align-items: center; width: 369px; height: 35px; }
.acct i { width: 1px; height: 18px; background: #36434b; margin: 0 14px 0 12px; }
.user { width: 98px; }
.help { width: 31px; }
.acct .mag { margin: 0 5px 0 6px; }
.frame { position: relative; margin: 0 8px; height: 736px; background: #15222b; border-radius: 4px; padding: 6px; display: flex; gap: 6px; }
.nav { width: 218px; height: 724px; background: #4b4c51; border-radius: 2px; }
.navhead { height: 27px; display: flex; align-items: center; padding: 0 12px 0 5px; gap: 6px; letter-spacing: .35px; }
.navhead span, .crumb span { margin-top: -2px; }
.navhead .ic:last-child { margin-left: auto; margin-top: -3px; }
.host { display: flex; align-items: center; height: 30px; padding-left: 7px; gap: 1px; font-weight: 500; }
.host span { margin-left: 4px; }
.sub { height: 17px; line-height: 17px; padding-left: 39px; color: #2c2d2f; }
.sub.two { margin-top: 10px; }
.navlist { margin-top: 10px; border-top: 1px solid #38393b; padding-top: 3px; }
.navrow { height: 23px; display: flex; align-items: center; padding: 0 5px 0 19px; gap: 6px; font-weight: 500; }
.navrow em { margin-left: auto; width: 30px; height: 22px; border: 1px solid #3a3b3e; border-radius: 3px; font-style: normal; font-weight: 400; text-align: right; padding: 3px 3px 0 0; font-size: 13px; line-height: 15px; }
.navrow.on { background: #002d45; color: #7e8a90; font-weight: 600; }
.navrow.on em { border-color: #0d2533; font-weight: 600; }
.col { width: 1652px; display: flex; flex-direction: column; gap: 7px; }
.store { height: 519px; background: #4b4c51; border-radius: 2px; }
.crumb { height: 27px; display: flex; align-items: center; padding-left: 7px; gap: 6px; letter-spacing: .17px; }
.subtabs { height: 27px; border-bottom: 1px solid #35363a; display: flex; line-height: 24px; padding-left: 5px; color: #2a2b2d; }
.subtabs .on { color: #1b1c1e; font-weight: 500; border-bottom: 3px solid #123347; padding-left: 4px; letter-spacing: .1px; }
.t1 { width: 131px; margin-right: 16px; }
.t2 { width: 93px; }
.t3 { width: 103px; }
.grid { margin: 21px 21px 0; background: #525357; border-radius: 2px; }
.gtool { height: 31px; display: flex; align-items: center; padding: 0 2px 4px 4px; color: #1c1d1f; }
.gtool b { color: #0b3c55; font-size: 12.500px; letter-spacing: .34px; margin-left: 5px; margin-top: 1px; font-weight: 600; }
.find { margin-left: auto; width: 160px; height: 23px; border: 1px solid #47484b; border-radius: 2px; display: flex; align-items: center; padding-left: 4px; gap: 6px; margin-top: 1px; color: #2c2d2f; }
.find .ic { color: #101112; }
.ghead { height: 33px; background: #58595b; border-bottom: 2px solid #48494c; display: flex; font-weight: 500; line-height: 31px; }
.ghead .ic { margin: 10px 5px 0 auto; }
.first { padding-left: 7px; flex: 1; }
.c1 { width: 130px; display: flex; }
.c2 { width: 161px; border-left: 1px solid #46474a; padding-left: 7px; display: flex; position: relative; letter-spacing: .17px; }
.c2 .ic { position: absolute; right: 6px; top: 0; margin-right: 0; }
.c3 { width: 161px; border-left: 1px solid #46474a; padding-left: 7px; display: flex; }
.grow { height: 31px; display: flex; justify-content: flex-end; align-items: center; font-weight: 500; padding-right: 2px; padding-bottom: 2px; letter-spacing: .1px; }
.grow .ic { margin: 20px 0 0 7px; }
.recent { height: 198px; background: #58595b; border-radius: 2px; overflow: hidden; }
.rhead { height: 28px; background: #4b4c51; display: flex; align-items: center; padding: 0 10px 3px 7px; gap: 7px; letter-spacing: .08px; }
.rhead .ic:last-child { margin-left: auto; }
.rcols { height: 34px; background: #5b5b5c; border-bottom: 2px solid #47484a; display: flex; line-height: 31px; font-weight: 500; }
.rcols .first, .rrow .first { padding-left: 8px; }
.rcols .ic { margin: 11px 0 0 5px; }
.rcols .ic.end { margin: 10px 5px 0 auto; }
.r1 { width: 272px; display: flex; }
.r2 { width: 199px; border-left: 1px solid #46474a; padding-left: 7px; display: flex; }
.rrow { height: 22px; background: #515254; display: flex; line-height: 19px; font-size: 10.500px; color: #2b2c2e; }
.rrow .first { letter-spacing: -.1px; }
.stamp { letter-spacing: -.32px; }
.link { color: #12384e; font-size: 12px; padding-left: 1px; }

.modal { position: absolute; left: 482px; top: 94px; width: 938px; height: 594px; border-radius: 5px; background: #cecdd8; box-shadow: 0 1px 5px #111, 0 0 0 1px #6a6a70; overflow: hidden; color: #45464a; display: flex; flex-direction: column; }
.mhead { height: 48px; flex: none; display: flex; align-items: center; padding-left: 3px; gap: 5px; font-size: 16px; font-weight: 300; padding-bottom: 3px; color: #222; letter-spacing: .16px; }
.mbody { height: 502px; display: flex; background: #d4d3df; overflow: hidden; }
.steps { list-style: none; margin: 0; padding: 10px 0 0 20px; width: 315px; background: #dbdae4; flex: none; }
.steps li { height: 30px; border-left: 5px solid #60b515; display: flex; align-items: center; padding: 0 0 2px 10px; color: #313136; font-weight: 500; }
.steps b { width: 18px; font-weight: 500; flex: none; }
.steps li:first-child b { width: 16px; }
.steps li span { letter-spacing: .14px; }
.steps .cur { background: linear-gradient(90deg, #c3c3c9 2px, #dbdae4 2px 5px, #c3c3c9 5px); }
.steps .todo { border-color: #a2a2a7; font-weight: 400; color: #4a4a50; }
.mcontent { width: 611px; padding-left: 10px; font-weight: 300; letter-spacing: .13px; }
h2 { margin: 8px 0 0; font-size: 18px; line-height: 22px; font-weight: 500; color: #2f2f33; letter-spacing: .33px; }
p { margin: 7px 0 0; line-height: 18px; width: 576px; height: 24px; border-bottom: 1px solid #9b9aa8; }
.selects { display: flex; gap: 5px; margin-top: 21px; }
.select { width: 150px; height: 30px; background: #fff; border: 1px solid #b9b9c0; border-radius: 2px; display: flex; align-items: center; justify-content: space-between; padding: 0 5px 2px; letter-spacing: .08px; }
.select.wide { width: 200px; }
h3 { margin: 41px 0 0; font-size: 18px; line-height: 22px; font-weight: 300; color: #2f2f33; letter-spacing: .28px; }
.part { display: flex; margin: 11px 0 0 13px; gap: 4px; line-height: 16px; }
.disk { width: 100px; height: 275px; background: #bfcc22; border: 2px solid #fd0000; border-radius: 5px; }
h3.after { margin-top: 7px; }
.next { width: 95px; height: 20px; margin: 11px 0 0 5px; background: #0f8fc8; }
.scroll { width: 8px; height: 317px; margin-top: 4px; background: #918fae; border-radius: 4px; }
.mfoot { height: 44px; display: flex; align-items: center; justify-content: flex-end; font-size: 12.500px; font-weight: 500; letter-spacing: 1.250px; padding-top: 1px; }
.mfoot .ic { margin: 30px 3px 0 3px; }
.cancel { color: #3f7ba5; margin-right: 23px; }
.btn { height: 32px; border: 1px solid #0072a3; border-radius: 3px; color: #0072a3; display: flex; align-items: center; justify-content: center; padding-bottom: 2px; font-weight: 600; margin-top: 2px; }
.prev { width: 112px; }
.go { width: 94px; height: 36px; border-width: 2px; margin-left: 9px; background: #b4d3e0; }
.done { width: 100px; margin-left: 8px; background: #a2a3a8; border-color: #a2a3a8; color: #dcdce2; }

.taskbar { height: 40px; flex: none; background: #020202; display: flex; }
.startbtn { width: 48px; display: flex; align-items: center; justify-content: center; }
.app { width: 49px; display: flex; align-items: center; justify-content: center; padding: 0 0 0 1px; border-bottom: 2px solid transparent; }
.app.on { background: linear-gradient(90deg, transparent 1px, #333435 1px); border-image: linear-gradient(#76b9ed, #76b9ed) 1; padding-left: 2px; }
.startbtn + .app { margin-left: 1px; }
.app.run { border-image: linear-gradient(90deg, transparent 5px, #76b9ed 5px 45px, transparent 45px) 2; }
.tray { margin-left: auto; display: flex; align-items: center; gap: 8px; padding-right: 5px; }
.lang, .date { display: flex; flex-direction: column; align-items: center; line-height: 17px; margin-top: -1px; }
.lang { width: 30px; margin: -1px -2px 0 -1px; }
.date { width: 58px; margin-left: 3px; letter-spacing: -.35px; }
.notes { display: flex; align-items: center; width: 46px; padding-left: 10px; height: 40px; border-right: 1px solid #888; position: relative; }
.notes b { position: absolute; left: 17px; top: 18px; width: 17px; height: 17px; border-radius: 50%; border: 1px solid #999; background: #333; font-weight: 400; line-height: 15px; text-align: center; }

.status { margin-top: 8px; height: 23px; display: flex; align-items: center; border: 1px solid #2b2e39; padding-left: 3px; gap: 2px; color: #c3c8d2; letter-spacing: .1px; }
.devices { margin-left: auto; display: flex; align-items: center; gap: 4px; width: 124px; padding-left: 3px; border-left: 2px solid #2b2e39; height: 21px; }
.msg { width: 20px; height: 21px; padding: 3px 0 0 1px; border-left: 2px solid #2b2e39; margin-left: -2px; }
</style>
